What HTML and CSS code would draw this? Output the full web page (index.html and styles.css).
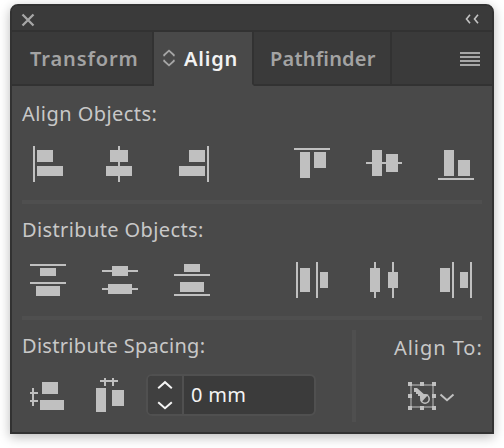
FILE: index.html
```html
<!DOCTYPE html>
<html lang="en">
<head>
<meta charset="utf-8">
<title>Align</title>
<link rel="stylesheet" href="styles.css">
</head>
<body>
<main class="panel">
  <header class="titlebar">
    <svg class="close" width="14" height="14" viewBox="0 0 14 14"><path d="M1.5 1.5l11 11M12.5 1.5l-11 11"/></svg>
    <svg class="collapse" width="14" height="10" viewBox="0 0 14 10"><path d="M5 .8L1.5 5L5 9.2M13 .8L9.5 5L13 9.2"/></svg>
  </header>
  <nav class="tabs">
    <div class="tab transform"><span>Transform</span></div>
    <div class="tab active">
      <svg class="cycle" width="12" height="18" viewBox="0 0 12 18"><path d="M1.2 7.2V6L6 1.6L10.8 6v1.2M1.2 10.8V12L6 16.4L10.8 12v-1.2"/></svg>
      <span>Align</span>
    </div>
    <div class="tab pathfinder"><span>Pathfinder</span></div>
    <div class="menu"><svg width="20" height="14" viewBox="0 0 20 14"><path d="M0 0h20v2H0zM0 4h20v2H0zM0 8h20v2H0zM0 12h20v2H0z"/></svg></div>
  </nav>
  <section class="group first">
    <h2 class="label align-label">Align Objects:</h2>
    <div class="icons">
      <svg class="icon" viewBox="0 0 36 36"><path d="M3 0h2v36h-2zM7 4h16v12h-16zM7 20h26v10h-26z"/></svg>
      <svg class="icon" viewBox="0 0 36 36"><path d="M16 0h2v36h-2zM8 4h18v12h-18zM4 20h26v10h-26z"/></svg>
      <svg class="icon" viewBox="0 0 36 36"><path d="M33 0h2v36h-2zM15 4h16v12h-16zM5 20h26v10h-26z"/></svg>
      <svg class="icon second" viewBox="0 0 36 36"><path d="M0 2h36v2h-36zM6 6h10v26h-10zM20 6h12v16h-12z"/></svg>
      <svg class="icon" viewBox="0 0 36 36"><path d="M0 16h36v2h-36zM6 4h10v26h-10zM20 8h12v18h-12z"/></svg>
      <svg class="icon" viewBox="0 0 36 36"><path d="M0 32h36v2h-36zM6 4h10v26h-10zM20 14h12v16h-12z"/></svg>
    </div>
  </section>
  <section class="group">
    <h2 class="label distribute-label">Distribute Objects:</h2>
    <div class="icons">
      <svg class="icon" viewBox="0 0 36 36"><path d="M0 2h36v2h-36zM10 6h16v8h-16zM0 20h36v2h-36zM6 24h24v10h-24z"/></svg>
      <svg class="icon" viewBox="0 0 36 36"><path d="M0 8h36v2h-36zM10 4h16v10h-16zM0 26h36v2h-36zM6 22h24v10h-24z"/></svg>
      <svg class="icon" viewBox="0 0 36 36"><path d="M10 2h16v8h-16zM0 12h36v2h-36zM6 20h24v10h-24zM0 32h36v2h-36z"/></svg>
      <svg class="icon second" viewBox="0 0 36 36"><path d="M2 0h2v36h-2zM6 6h10v24h-10zM22 0h2v36h-2zM26 10h8v16h-8z"/></svg>
      <svg class="icon" viewBox="0 0 36 36"><path d="M8 0h2v36h-2zM4 6h10v24h-10zM26 0h2v36h-2zM22 10h10v16h-10z"/></svg>
      <svg class="icon" viewBox="0 0 36 36"><path d="M2 6h10v24h-10zM14 0h2v36h-2zM22 10h8v16h-8zM32 0h2v36h-2z"/></svg>
    </div>
  </section>
  <section class="bottom">
    <div class="spacing">
      <h2 class="label spacing-label">Distribute Spacing:</h2>
      <div class="controls">
        <svg class="icon" viewBox="0 0 36 36"><path d="M12 4h16v12h-16zM10 22h24v10h-24zM2 10h2v18h-2zM0 14h8v2h-8zM0 22h8v2h-8z"/></svg>
        <svg class="icon" viewBox="0 0 36 36"><path d="M10 2h18v2h-18zM14 0h2v8h-2zM22 0h2v8h-2zM6 10h10v24h-10zM22 12h12v16h-12z"/></svg>
        <div class="field">
          <div class="stepper">
            <svg width="16" height="30" viewBox="0 0 16 30"><path d="M1.2 8.2L8 2.2l6.8 6M1.2 22.2l6.8 6l6.8-6"/></svg>
          </div>
          <div class="value">0 mm</div>
        </div>
      </div>
    </div>
    <div class="target">
      <h2 class="label target-label">Align To:</h2>
      <div class="picker">
        <svg width="28" height="28" viewBox="0 0 28 28">
          <path class="frame" d="M3 3h22v22H3z"/>
          <path class="solid" d="M0 0h4v4H0zM12 0h4v4h-4zM24 0h4v4h-4zM0 12h4v4H0zM24 12h4v4h-4zM0 24h4v4H0zM12 24h4v4h-4zM24 24h4v4h-4z"/>
          <path class="solid" d="M6 6h3l9 8-4 4-2-2v-2h-2v-2H8v-2H6z"/>
          <circle class="ring" cx="17" cy="17" r="4.2"/>
          <path class="solid" d="M12.8 19V14.5L15 12.5h5.5L13.8 19.8z"/>
        </svg>
        <svg class="arrow" width="16" height="10" viewBox="0 0 16 10"><path d="M1.5 1.5L8 7.2l6.5-5.7"/></svg>
      </div>
    </div>
  </section>
</main>
</body>
</html>
```

FILE: styles.css
```css
* { box-sizing: border-box; }
body {
  margin: 0;
  padding: 4px 10px 14px;
  height: 448px;
  overflow: hidden;
  background: #fff;
  font-family: "Noto Sans", "Open Sans", sans-serif;
  font-size: 20px;
  color: #c8c8c8;
}
svg { display: block; flex: none; fill: #c0c0c0; }
.panel {
  width: 484px;
  height: 430px;
  border: 2px solid #323232;
  border-radius: 8px 8px 0 0;
  background: #494949;
  box-shadow: 0 3px 12px rgba(0, 0, 0, .28);
}
.titlebar {
  height: 26px;
  padding: 0 15px 0 9px;
  display: flex;
  justify-content: space-between;
  align-items: center;
  background: #3a3a3a;
  border-bottom: 2px solid #323232;
  border-radius: 6px 6px 0 0;
}
.close { fill: none; stroke: #a6a6a6; stroke-width: 2.3; margin-top: 4px; }
.collapse { fill: none; stroke: #c4c4c4; stroke-width: 1.6; margin: 2px -2px 0 0; }
.tabs { display: flex; height: 54px; background: #3a3a3a; }
.tab {
  display: flex;
  align-items: center;
  border-right: 2px solid #323232;
  border-bottom: 2px solid #323232;
  font-weight: 600;
  color: #a3a3a3;
  white-space: nowrap;
}
.transform { width: 142px; padding-left: 18px; letter-spacing: .9px; }
.active { width: 100px; padding-left: 9px; gap: 9px; background: #494949; border-bottom-color: #494949; color: #f2f2f2; letter-spacing: .8px; }
.cycle { fill: none; stroke: #a6a6a6; stroke-width: 1.8; }
.pathfinder { width: 138px; padding-left: 16px; letter-spacing: .2px; }
.menu { flex: 1; padding: 20px 12px 0 0; border-bottom: 2px solid #323232; }
.menu svg { margin-left: auto; fill: #a6a6a6; }
.label { margin: 0; height: 28px; line-height: 28px; font-size: 20px; font-weight: 400; white-space: nowrap; }
.align-label { letter-spacing: .45px; }
.distribute-label { letter-spacing: .38px; }
.spacing-label { letter-spacing: .3px; }
.target-label { letter-spacing: .95px; }
.group { height: 116px; margin: 0 10px; padding-top: 12px; border-bottom: 4px solid #4f4f4f; }
.first { height: 118px; padding-top: 14px; }
.icons { display: flex; gap: 36px; padding: 18px 0 0 8px; }
.icon { width: 36px; height: 36px; }
.second { margin-left: 48px; }
.bottom { display: flex; padding: 10px 10px 0; }
.spacing { width: 330px; padding-top: 2px; }
.controls { display: flex; padding: 14px 0 0 8px; align-items: flex-start; }
.controls .icon { margin-top: 4px; }
.controls .icon + .icon { margin-left: 24px; }
.field { display: flex; width: 170px; height: 42px; margin-left: 20px; border: 2px solid #505050; border-radius: 6px; overflow: hidden; background: #3b3b3b; color: #f4f4f4; }
.stepper { width: 36px; padding: 4px 0 0 9px; border-right: 2px solid #505050; background: #404040; }
.stepper svg { fill: none; stroke: #f4f4f4; stroke-width: 2; }
.value { padding-left: 7px; line-height: 37px; letter-spacing: .3px; }
.target { width: 130px; height: 92px; padding: 4px 0 0 38px; border-left: 4px solid #4f4f4f; }
.picker { display: flex; align-items: center; padding: 20px 0 0 14px; gap: 3px; }
.frame { fill: none; stroke: #858585; stroke-width: 2; }
.ring { fill: none; stroke: #c0c0c0; stroke-width: 1.5; }
.arrow { fill: none; stroke: #c0c0c0; stroke-width: 2; margin-top: 4px; }
```
